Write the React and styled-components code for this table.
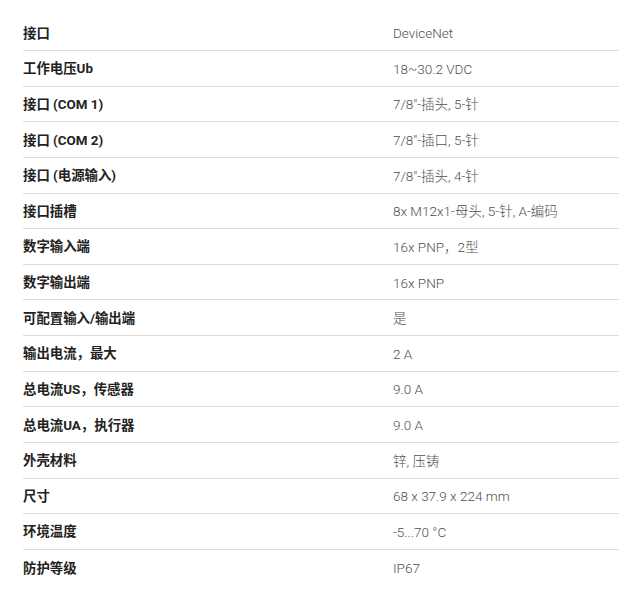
import React from 'react';
import styled, { createGlobalStyle } from 'styled-components';

const GlobalStyle = createGlobalStyle`
  body {
    margin: 0;
    background: #fff;
    font-family: Roboto, "Noto Sans CJK SC", sans-serif;
  }
`;

const Wrapper = styled.main`
  padding: 15.4px 0 0 23px;
`;

const Table = styled.div`
  display: flex;
  flex-direction: column;
`;

const Row = styled.div`
  display: grid;
  grid-template-columns: 370px 1fr;
  align-items: center;
  box-sizing: border-box;
  height: 35.64px;
  border-bottom: ${p => (p.last ? 'none' : '1px solid #dcdcdc')};
`;

const Label = styled.div`
  font-size: 13.4px;
  font-weight: 700;
  color: #222;
  line-height: 18px;
  padding-top: 2px;
`;

const Value = styled.div`
  font-size: 13.5px;
  font-weight: 300;
  color: #505050;
  line-height: 18px;
  padding-top: 1px;
`;

const specs = [
  ['接口', 'DeviceNet'],
  ['工作电压Ub', '18~30.2 VDC'],
  ['接口 (COM 1)', '7/8"-插头, 5-针'],
  ['接口 (COM 2)', '7/8"-插口, 5-针'],
  ['接口 (电源输入)', '7/8"-插头, 4-针'],
  ['接口插槽', '8x M12x1-母头, 5-针, A-编码'],
  ['数字输入端', '16x PNP，2型'],
  ['数字输出端', '16x PNP'],
  ['可配置输入/输出端', '是'],
  ['输出电流，最大', '2 A'],
  ['总电流US，传感器', '9.0 A'],
  ['总电流UA，执行器', '9.0 A'],
  ['外壳材料', '锌, 压铸'],
  ['尺寸', '68 x 37.9 x 224 mm'],
  ['环境温度', '-5...70 °C'],
  ['防护等级', 'IP67'],
];

export default function App() {
  return (
    <>
      <GlobalStyle />
      <Wrapper>
        <Table>
          {specs.map(([label, value], index) => (
            <Row key={label} last={index === specs.length - 1}>
              <Label>{label}</Label>
              <Value>{value}</Value>
            </Row>
          ))}
        </Table>
      </Wrapper>
    </>
  );
}
